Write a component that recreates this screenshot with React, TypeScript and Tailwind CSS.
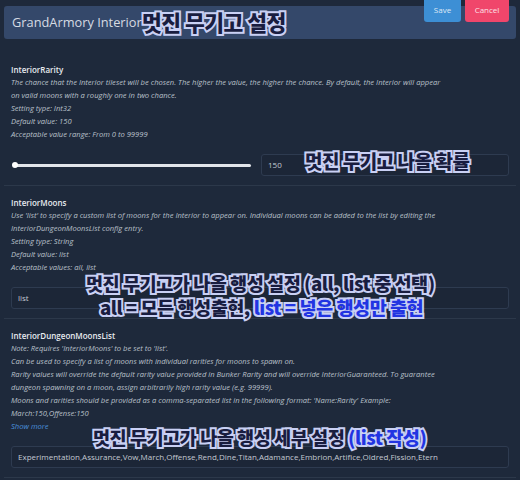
import React from "react";

const note =
  "absolute whitespace-nowrap font-black text-[#191d40] [font-family:'Noto_Sans_CJK_KR','Noto_Sans',sans-serif] [-webkit-text-stroke:4px_#c9d0f4] [paint-order:stroke_fill] leading-none tracking-[-0.5px]";

function Section({
  title,
  lines,
  showMore,
  children,
  last,
}: {
  title: string;
  lines: string[];
  showMore?: boolean;
  children: React.ReactNode;
  last?: boolean;
}) {
  return (
    <div className={`px-[7px] pt-[10px] pb-[9px] ${last ? "" : "border-b border-[#2c384a]"}`}>
      <div className="text-[8px] leading-[13px] font-semibold text-[#e8ebf0]">{title}</div>
      {lines.map((l, i) => (
        <div key={i} className="text-[7.6px] leading-[13px] italic text-[#b9c0ca] whitespace-nowrap">
          {l}
        </div>
      ))}
      {showMore && (
        <div className="text-[7.6px] leading-[13px] italic text-[#4a90dc]">Show more</div>
      )}
      <div className="mt-[13px]">{children}</div>
    </div>
  );
}

function Input({ value }: { value: string }) {
  return (
    <div className="h-[22px] rounded-[3px] border border-[#2e3b50] bg-[#1c2637] flex items-center px-[6px] text-[8px] text-[#c3c9d2] whitespace-nowrap overflow-hidden">
      {value}
    </div>
  );
}

export default function App() {
  return (
    <div className="relative w-[520px] h-[480px] overflow-hidden bg-[#1e293b] [font-family:'Open_Sans','Noto_Sans',sans-serif]">
      {/* header */}
      <div className="mx-[4px] mt-[6px] h-[33px] rounded-[3px] bg-[#34486a] flex items-center px-[8px]">
        <span className="text-[12.8px] text-[#d6dbe3]">GrandArmory Interior</span>
      </div>
      <div className="absolute top-[-6px] left-[424px] flex gap-[4px]">
        <div className="w-[37px] h-[28px] rounded-[3px] bg-[#3d8fd5] flex items-end justify-center pb-[6px] text-[8px] text-[#dfe9f5]">
          Save
        </div>
        <div className="w-[44px] h-[28px] rounded-[3px] bg-[#f0466b] flex items-end justify-center pb-[6px] text-[8px] text-[#fde1e7]">
          Cancel
        </div>
      </div>

      <div className="mx-[4px] mt-[14px]">
        <Section
          title="InteriorRarity"
          lines={[
            "The chance that the Interior tileset will be chosen. The higher the value, the higher the chance. By default, the Interior will appear",
            "on valid moons with a roughly one in two chance.",
            "Setting type: Int32",
            "Default value: 150",
            "Acceptable value range: From 0 to 99999",
          ]}
        >
          <div className="grid grid-cols-[1fr_248px] gap-[6px] items-center">
            <div className="relative h-[22px] flex items-center pl-[2px] pr-[4px]">
              <div className="h-[3px] w-full rounded-full bg-[#e2e5ea]" />
              <div className="absolute left-[1px] top-[8px] w-[6px] h-[6px] rounded-full bg-white" />
            </div>
            <Input value="150" />
          </div>
        </Section>
        <Section
          title="InteriorMoons"
          lines={[
            "Use 'list' to specify a custom list of moons for the Interior to appear on. Individual moons can be added to the list by editing the",
            "InteriorDungeonMoonsList config entry.",
            "Setting type: String",
            "Default value: list",
            "Acceptable values: all, list",
          ]}
        >
          <Input value="list" />
        </Section>
        <Section
          title="InteriorDungeonMoonsList"
          lines={[
            "Note: Requires 'InteriorMoons' to be set to 'list'.",
            "Can be used to specify a list of moons with individual rarities for moons to spawn on.",
            "Rarity values will override the default rarity value provided in Bunker Rarity and will override InteriorGuaranteed. To guarantee",
            "dungeon spawning on a moon, assign arbitrarily high rarity value (e.g.  99999).",
            "Moons and rarities should be provided as a comma-separated list in the following format: 'Name:Rarity' Example:",
            "March:150,Offense:150",
          ]}
          showMore
        >
          <Input value="Experimentation,Assurance,Vow,March,Offense,Rend,Dine,Titan,Adamance,Embrion,Artifice,Oldred,Fission,Etern" />
        </Section>
      </div>

      {/* annotations */}
      <div className={`${note} left-[142px] top-[11px] text-[21.5px]`}>멋진 무기고 설정</div>
      <div className={`${note} left-[305px] top-[151px] text-[19px]`}>멋진 무기고 나올 확률</div>
      <div className={`${note} left-[86px] top-[274px] text-[18.6px]`}>멋진 무기고가 나올 행성 설정 (all, list 중 선택)</div>
      <div className={`${note} left-[100px] top-[298px] text-[18.6px]`}>
        all = 모든 행성출현, <span className="text-[#2234e2]">list = 넣은 행성만 출현</span>
      </div>
      <div className={`${note} left-[93px] top-[428px] text-[18.6px]`}>
        멋진 무기고가 나올 행성 세부 설정 <span className="text-[#2234e2]">(list 작성)</span>
      </div>
    </div>
  );
}
